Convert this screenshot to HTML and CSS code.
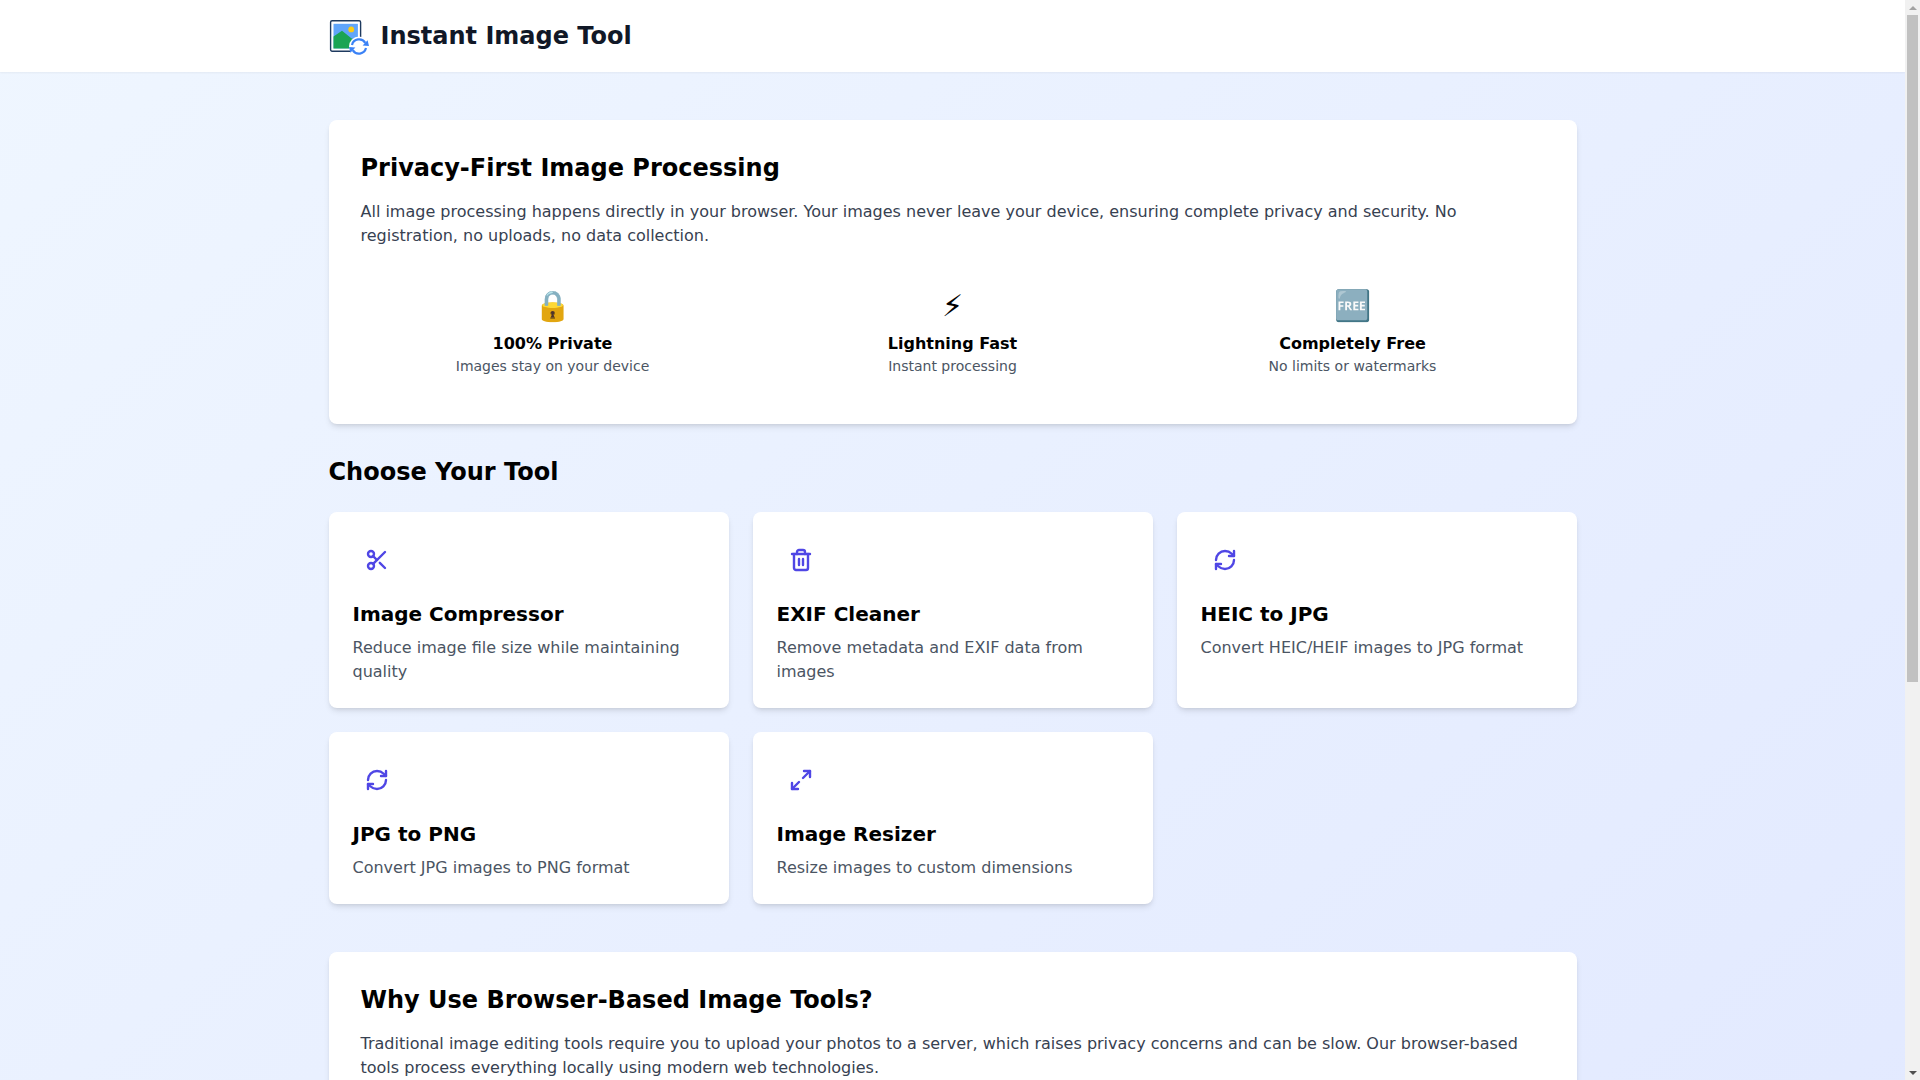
FILE: index.html
```html
<!DOCTYPE html>
<html lang="en">
<head>
<meta charset="utf-8">
<title>Instant Image Tool</title>
<link rel="stylesheet" href="styles.css">
</head>
<body>
<header class="site-header">
  <div class="container header-inner">
    <svg class="logo" viewBox="0 0 40 40" aria-hidden="true">
      <rect x="1.6" y="4.7" width="30" height="30.6" rx="1.5" fill="#fff" stroke="#1e3a5f" stroke-width="1.4"/>
      <rect x="4.5" y="7.8" width="24.4" height="24.6" fill="#60a5fa"/>
      <path d="M4.5 32.4V20.5L13 14.8l9 7.2 6.9 4v6.4z" fill="#16a34a" opacity=".95"/>
      <circle cx="22.2" cy="13.4" r="2.9" fill="#facc15"/>
      <circle cx="30" cy="30.5" r="10" fill="#fff"/>
      <path d="M23 28.9A7.3 7.3 0 0 1 36.3 26.8M37 32.1A7.3 7.3 0 0 1 23.7 34.2" fill="none" stroke="#3b82f6" stroke-width="2.2"/>
      <path d="M40 30l-6.4-.6 5-5.1zM20 31l6.4.6-5 5.1z" fill="#3b82f6"/>
    </svg>
    <h1 class="brand">Instant Image Tool</h1>
  </div>
</header>
<main class="container main">
  <section class="panel">
    <h2 class="panel-title">Privacy-First Image Processing</h2>
    <p class="panel-text">All image processing happens directly in your browser. Your images never leave your device, ensuring complete privacy and security. No registration, no uploads, no data collection.</p>
    <div class="features">
      <div class="feature">
        <div class="emoji">🔒</div>
        <h3 class="feature-title">100% Private</h3>
        <p class="feature-text">Images stay on your device</p>
      </div>
      <div class="feature">
        <div class="emoji">⚡</div>
        <h3 class="feature-title">Lightning Fast</h3>
        <p class="feature-text">Instant processing</p>
      </div>
      <div class="feature">
        <div class="emoji">🆓</div>
        <h3 class="feature-title">Completely Free</h3>
        <p class="feature-text">No limits or watermarks</p>
      </div>
    </div>
  </section>

  <h2 class="section-title">Choose Your Tool</h2>
  <div class="tools">
    <a class="tool" href="#">
      <span class="tool-icon"><svg viewBox="0 0 24 24"><circle cx="6" cy="6" r="3"/><path d="M8.12 8.12 12 12"/><path d="M20 4 8.12 15.88"/><circle cx="6" cy="18" r="3"/><path d="M14.8 14.8 20 20"/></svg></span>
      <h3 class="tool-title">Image Compressor</h3>
      <p class="tool-text">Reduce image file size while maintaining quality</p>
    </a>
    <a class="tool" href="#">
      <span class="tool-icon"><svg viewBox="0 0 24 24"><path d="M3 6h18"/><path d="M19 6v14c0 1-1 2-2 2H7c-1 0-2-1-2-2V6"/><path d="M8 6V4c0-1 1-2 2-2h4c1 0 2 1 2 2v2"/><path d="M10 11v6"/><path d="M14 11v6"/></svg></span>
      <h3 class="tool-title">EXIF Cleaner</h3>
      <p class="tool-text">Remove metadata and EXIF data from images</p>
    </a>
    <a class="tool" href="#">
      <span class="tool-icon"><svg viewBox="0 0 24 24"><path d="M3 12a9 9 0 0 1 9-9 9.75 9.75 0 0 1 6.74 2.74L21 8"/><path d="M21 3v5h-5"/><path d="M21 12a9 9 0 0 1-9 9 9.75 9.75 0 0 1-6.74-2.74L3 16"/><path d="M8 16H3v5"/></svg></span>
      <h3 class="tool-title">HEIC to JPG</h3>
      <p class="tool-text">Convert HEIC/HEIF images to JPG format</p>
    </a>
    <a class="tool" href="#">
      <span class="tool-icon"><svg viewBox="0 0 24 24"><path d="M3 12a9 9 0 0 1 9-9 9.75 9.75 0 0 1 6.74 2.74L21 8"/><path d="M21 3v5h-5"/><path d="M21 12a9 9 0 0 1-9 9 9.75 9.75 0 0 1-6.74-2.74L3 16"/><path d="M8 16H3v5"/></svg></span>
      <h3 class="tool-title">JPG to PNG</h3>
      <p class="tool-text">Convert JPG images to PNG format</p>
    </a>
    <a class="tool" href="#">
      <span class="tool-icon"><svg viewBox="0 0 24 24"><path d="M15 3h6v6"/><path d="M21 3l-7 7"/><path d="M9 21H3v-6"/><path d="M3 21l7-7"/></svg></span>
      <h3 class="tool-title">Image Resizer</h3>
      <p class="tool-text">Resize images to custom dimensions</p>
    </a>
  </div>

  <section class="panel why">
    <h2 class="panel-title">Why Use Browser-Based Image Tools?</h2>
    <p class="panel-text">Traditional image editing tools require you to upload your photos to a server, which raises privacy concerns and can be slow. Our browser-based tools process everything locally using modern web technologies.</p>
    <ul class="benefits">
      <li>Your images are never uploaded to a server</li>
      <li>Processing starts instantly with no waiting</li>
      <li>Works on any modern desktop or mobile browser</li>
      <li>No account or installation needed</li>
    </ul>
  </section>

  <section class="panel why">
    <h2 class="panel-title">How It Works</h2>
    <h3 class="feature-title">Pick a tool</h3>
    <p class="panel-line">Choose the tool that fits your task.</p>
    <h3 class="feature-title">Add your image</h3>
    <p class="panel-line">The file is opened locally by your browser.</p>
    <h3 class="feature-title">Download the result</h3>
    <p class="panel-line">Save the processed image to your device.</p>
  </section>
</main>
<footer class="site-footer">
  <div class="container footer-inner">© Instant Image Tool. All processing happens in your browser.</div>
</footer>
<div class="scrollbar" aria-hidden="true">
  <span class="scroll-btn"><span class="arrow-up"></span></span>
  <span class="scroll-thumb"></span>
  <span class="scroll-rest"></span>
  <span class="scroll-btn"><span class="arrow-down"></span></span>
</div>
</body>
</html>
```
FILE: styles.css
```css
* { box-sizing: border-box; }
html { width: calc(100% - 15px); }
body {
  margin: 0;
  font-family: "DejaVu Sans", sans-serif;
  font-size: 16px;
  line-height: 24px;
  color: #000;
  background: linear-gradient(to bottom right, #eff6ff, #e0e7ff);
}
h1, h2, h3, p, ul { margin: 0; padding: 0; }
.container { width: 100%; max-width: 1280px; margin: 0 auto; padding: 0 16px; }
.site-header { background: #fff; box-shadow: 0 1px 2px rgba(0, 0, 0, .05); }
.header-inner { display: flex; align-items: center; gap: 12px; padding-top: 16px; padding-bottom: 16px; }
.logo { width: 40px; height: 40px; display: block; }
.brand { font-size: 24px; line-height: 32px; font-weight: 700; color: #111827; }
.main { padding-top: 48px; padding-bottom: 48px; }
.panel { background: #fff; border-radius: 8px; padding: 32px; box-shadow: 0 4px 6px -1px rgba(0, 0, 0, .1), 0 2px 4px -2px rgba(0, 0, 0, .1); }
.panel-title { font-size: 24px; line-height: 32px; font-weight: 700; margin-bottom: 16px; }
.panel-text { color: #374151; margin-bottom: 24px; }
.panel-line { color: #374151; }
.features { display: grid; grid-template-columns: repeat(3, 1fr); gap: 16px; }
.feature { padding: 16px; text-align: center; }
.emoji { font-size: 30px; line-height: 36px; margin-bottom: 8px; }
.feature-title { font-size: 16px; line-height: 24px; font-weight: 700; }
.feature-text { font-size: 14px; line-height: 20px; color: #4b5563; }
.section-title { font-size: 24px; line-height: 32px; font-weight: 700; margin: 32px 0 24px; }
.tools { display: grid; grid-template-columns: repeat(3, 1fr); gap: 24px; }
.tool { display: block; background: #fff; border-radius: 8px; padding: 24px; color: inherit; text-decoration: none; box-shadow: 0 4px 6px -1px rgba(0, 0, 0, .1), 0 2px 4px -2px rgba(0, 0, 0, .1); }
.tool-icon { display: block; width: 48px; height: 48px; padding: 12px; margin-bottom: 16px; color: #4f46e5; }
.tool-icon svg { display: block; width: 24px; height: 24px; fill: none; stroke: currentColor; stroke-width: 2.4; stroke-linecap: round; stroke-linejoin: round; }
.tool-title { font-size: 20px; line-height: 28px; font-weight: 700; margin-bottom: 8px; }
.tool-text { color: #4b5563; }
.why { margin-top: 48px; }
.benefits { list-style: disc inside; color: #374151; display: grid; gap: 12px; }
.site-footer { background: #fff; padding: 32px 0; }
.footer-inner { text-align: center; font-size: 14px; line-height: 20px; color: #4b5563; }
.scrollbar { position: fixed; top: 0; right: 0; bottom: 0; width: 15px; display: flex; flex-direction: column; align-items: center; background: #f1f1f1; }
.scroll-btn { flex: none; width: 15px; height: 15px; display: flex; align-items: center; justify-content: center; }
.scroll-thumb { flex: none; width: 11px; height: 667px; background: #c1c1c1; }
.scroll-rest { flex: 1; }
.arrow-up { width: 0; height: 0; border-left: 4px solid transparent; border-right: 4px solid transparent; border-bottom: 4px solid #a3a3a3; }
.arrow-down { width: 0; height: 0; border-left: 4px solid transparent; border-right: 4px solid transparent; border-top: 4px solid #505050; }
```
